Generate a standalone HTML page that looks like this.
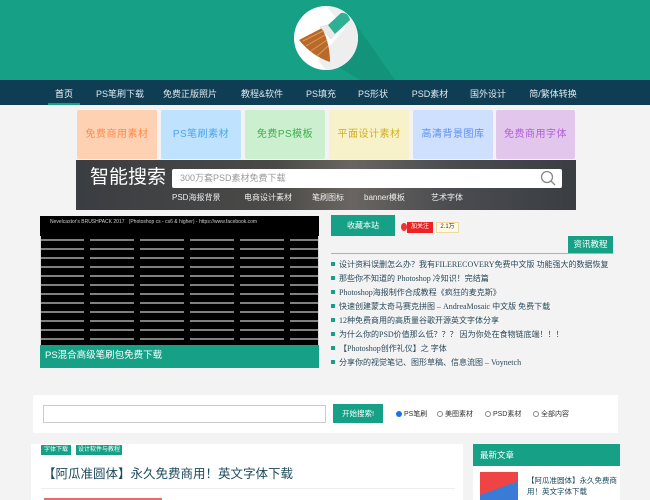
<!DOCTYPE html>
<html><head><meta charset="utf-8"><style>
*{margin:0;padding:0;box-sizing:border-box}
body{width:650px;height:500px;overflow:hidden;background:#f3f3f3;font-family:"Liberation Sans","Noto Sans CJK SC",sans-serif;position:relative}
.a{position:absolute}
.hdr{left:0;top:0;width:650px;height:80px;background:#16a085;overflow:hidden}
.nav{left:0;top:80px;width:650px;height:25px;background:#0f3d54}
.nav span{position:absolute;top:7px;font-size:9px;color:#e0e8ec;transform:translateX(-50%);white-space:nowrap}
.tile{top:110px;height:49px;width:80px;font-size:10px;text-align:center;line-height:49px;border-radius:2px;letter-spacing:.5px}
.li{left:331px;font-size:8px;color:#2a4a5a;font-family:"Liberation Serif","Noto Sans CJK SC",serif;white-space:nowrap}
.li:before{content:"";display:inline-block;width:4px;height:4px;background:#16a085;margin-right:4px;vertical-align:1px}
.lk{top:192px;font-size:8px;color:#eee;white-space:nowrap}
</style></head><body>
<div class="a hdr">
<svg width="650" height="80" style="position:absolute;left:0;top:0">
<polygon points="350,16 395,80 360,80 330,62" fill="#138f75" opacity="0.7"/>
<circle cx="326" cy="38" r="32" fill="#fff"/>
<path d="M326 6 A32 32 0 0 1 326 70 L318 60 L345 28 Z" fill="#eeeeee"/>
<path d="M299 40 L322 28 Q330 44 330 62 Q312 56 299 40 Z" fill="#b86a2a"/>
<path d="M303 41 L323 31 M306 46 L325 35 M311 51 L327 40 M317 56 L328 46" stroke="#e09a55" stroke-width="1" fill="none"/>
<path d="M320 27 L328 25 L335 34 L331 39 Z" fill="#eaeaea" stroke="#cfcfcf" stroke-width="0.5"/>
<path d="M328 25 L341 13 Q348 12 350 20 L335 34 Z" fill="#2fb094"/>
</svg>
</div>
<div class="a nav">
<span style="left:64px;color:#fff">首页</span><span style="left:120px">PS笔刷下载</span><span style="left:190px">免费正版照片</span><span style="left:262px">教程&amp;软件</span><span style="left:321px">PS填充</span><span style="left:373px">PS形状</span><span style="left:430px">PSD素材</span><span style="left:488px">国外设计</span><span style="left:553px">简/繁体转换</span>
<div class="a" style="left:48px;top:23px;width:32px;height:2px;background:#16a085"></div>
</div>
<div class="a tile" style="left:77px;background:#ffd1b3;color:#ff8a4a">免费商用素材</div>
<div class="a tile" style="left:161px;background:#bfe2ff;color:#4aa3f0">PS笔刷素材</div>
<div class="a tile" style="left:245px;background:#ccefcf;color:#3bb04a">免费PS模板</div>
<div class="a tile" style="left:329px;background:#f7f2c9;color:#d0b020">平面设计素材</div>
<div class="a tile" style="left:413px;background:#cfe0ff;color:#5a8ef0">高清背景图库</div>
<div class="a tile" style="left:496px;width:79px;background:#e2c6ec;color:#b060d8">免费商用字体</div>
<div class="a" style="left:76px;top:160px;width:500px;height:50px;background:linear-gradient(90deg,#3a3d42,#4b4a48 40%,#6a6560 55%,#4a4c50 75%,#3a3d42)"></div>
<div class="a" style="left:90px;top:165px;color:#fff;font-size:19px;line-height:26px">智能搜索</div>
<div class="a" style="left:172px;top:169px;width:390px;height:19px;background:#fff;border-radius:2px;font-size:9px;color:#999;line-height:19px;padding-left:8px">300万套PSD素材免费下载</div>
<svg class="a" style="left:540px;top:170px" width="16" height="16"><circle cx="7" cy="7" r="5.5" stroke="#888" stroke-width="1.3" fill="none"/><line x1="11" y1="11" x2="15" y2="15" stroke="#888" stroke-width="1.3"/></svg>
<div class="a lk" style="left:172px">PSD海报背景</div>
<div class="a lk" style="left:244px">电商设计素材</div>
<div class="a lk" style="left:312px">笔刷图标</div>
<div class="a lk" style="left:364px">banner模板</div>
<div class="a lk" style="left:431px">艺术字体</div>
<div class="a" style="left:40px;top:216px;width:279px;height:152px;background:#000 repeating-linear-gradient(180deg,transparent 0 4px,rgba(255,255,255,.5) 4px 6px,transparent 6px 9px);border:1px solid #ddd"></div>
<div class="a" style="left:40px;top:216px;width:279px;height:152px;background:repeating-linear-gradient(90deg,transparent 0 44px,#000 44px 50px)"></div>
<div class="a" style="left:40px;top:216px;width:279px;height:20px;background:#000;color:#ccc;font-size:5px;padding:3px 10px">Nevelcastor's BRUSHPACK 2017 &nbsp; (Photoshop cs - cs6 &amp; higher) - https://www.facebook.com</div>
<div class="a" style="left:40px;top:345px;width:279px;height:23px;background:#16a085;color:#fff;font-size:9.5px;line-height:22px;padding-left:5px">PS混合高级笔刷包免费下载</div>
<div class="a" style="left:331px;top:215px;width:64px;height:21px;background:#16a085;color:#fff;font-size:8px;text-align:center;line-height:21px">收藏本站</div>
<div class="a" style="left:401px;top:223px;width:6px;height:8px;background:#e33;border-radius:50%"></div>
<div class="a" style="left:407px;top:222px;width:26px;height:11px;background:#e22;color:#fff;font-size:6px;line-height:11px;text-align:center">加关注</div>
<div class="a" style="left:436px;top:222px;width:23px;height:11px;background:#fffbe6;border:1px solid #f0d9a0;color:#333;font-size:6px;line-height:9px;text-align:center">2.1万</div>
<div class="a" style="left:568px;top:236px;width:45px;height:17px;background:#16a085;color:#fff;font-size:8.5px;text-align:center;line-height:17px">资讯教程</div>
<div class="a" style="left:331px;top:253px;width:282px;height:1px;background:#7fc7b6"></div>
<div class="a li" style="top:259px">设计资料误删怎么办？我有FILERECOVERY免费中文版 功能强大的数据恢复</div>
<div class="a li" style="top:273px">那些你不知道的 Photoshop 冷知识！完结篇</div>
<div class="a li" style="top:287px">Photoshop海报制作合成教程《疯狂的麦克斯》</div>
<div class="a li" style="top:301px">快速创建蒙太奇马赛克拼图 – AndreaMosaic 中文版 免费下载</div>
<div class="a li" style="top:315px">12种免费商用的高质量谷歌开源英文字体分享</div>
<div class="a li" style="top:329px">为什么你的PSD价值那么低？？？ 因为你处在食物链底端！！！</div>
<div class="a li" style="top:343px">【Photoshop创作礼仪】之 字体</div>
<div class="a li" style="top:357px">分享你的视觉笔记、图形草稿、信息流图 – Voynetch</div>
<div class="a" style="left:33px;top:395px;width:585px;height:38px;background:#fff"></div>
<div class="a" style="left:43px;top:405px;width:283px;height:18px;border:1px solid #ccc"></div>
<div class="a" style="left:333px;top:404px;width:50px;height:19px;background:#16a085;color:#fff;font-size:7.5px;text-align:center;line-height:19px">开始搜索!</div>
<div class="a" style="left:396px;top:409px;font-size:7px;color:#333;white-space:nowrap"><span style="display:inline-block;width:6px;height:6px;border-radius:50%;background:#1a73e8;vertical-align:-1px"></span> PS笔刷</div>
<div class="a" style="left:437px;top:409px;font-size:7px;color:#333;white-space:nowrap"><span style="display:inline-block;width:6px;height:6px;border-radius:50%;border:1px solid #888;vertical-align:-1px"></span> 美图素材</div>
<div class="a" style="left:485px;top:409px;font-size:7px;color:#333;white-space:nowrap"><span style="display:inline-block;width:6px;height:6px;border-radius:50%;border:1px solid #888;vertical-align:-1px"></span> PSD素材</div>
<div class="a" style="left:533px;top:409px;font-size:7px;color:#333;white-space:nowrap"><span style="display:inline-block;width:6px;height:6px;border-radius:50%;border:1px solid #888;vertical-align:-1px"></span> 全部内容</div>
<div class="a" style="left:31px;top:444px;width:432px;height:56px;background:#fff"></div>
<div class="a" style="left:41px;top:445px;width:30px;height:10px;background:#16a085;color:#fff;font-size:6px;line-height:10px;text-align:center">字体下载</div>
<div class="a" style="left:76px;top:445px;width:46px;height:10px;background:#16a085;color:#fff;font-size:6px;line-height:10px;text-align:center">设计软件与教程</div>
<div class="a" style="left:43px;top:463px;font-size:12.5px;color:#1d4a5c">【阿瓜准圆体】永久免费商用！英文字体下载</div>
<div class="a" style="left:41px;top:488px;width:414px;height:1px;background:#eee"></div>
<div class="a" style="left:44px;top:498px;width:118px;height:2px;background:#e86a6a"></div>
<div class="a" style="left:473px;top:444px;width:147px;height:22px;background:#16a085;color:#fff;font-size:8.5px;line-height:22px;padding-left:7px">最新文章</div>
<div class="a" style="left:473px;top:466px;width:147px;height:34px;background:#fff"></div>
<div class="a" style="left:480px;top:472px;width:38px;height:28px;background:linear-gradient(160deg,#e44 0 55%,#3a7bd5 55%)"></div>
<div class="a" style="left:527px;top:475px;width:90px;font-size:7.5px;color:#1d4a5c;line-height:11px">【阿瓜准圆体】永久免费商用！英文字体下载</div>
</body></html>
